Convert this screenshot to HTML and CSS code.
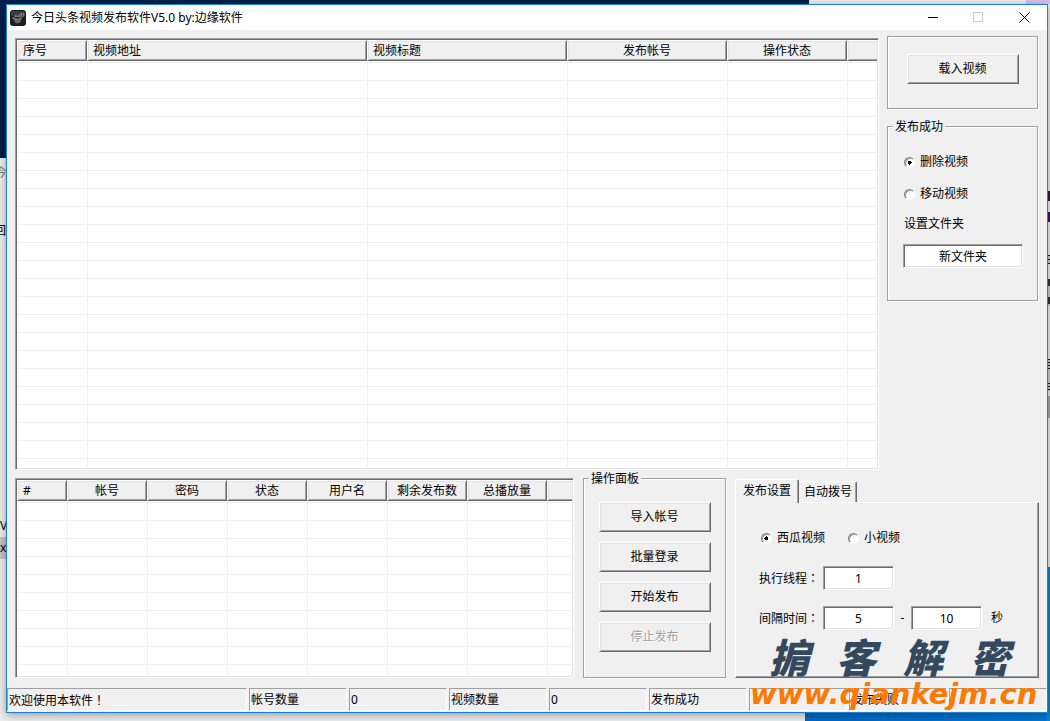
FILE: index.html
```html
<!DOCTYPE html>
<html lang="zh-CN">
<head>
<meta charset="utf-8">
<title>今日头条视频发布软件V5.0 by:边缘软件</title>
<link rel="stylesheet" href="styles.css">
</head>
<body class="desktop">
<div class="backdrop" aria-hidden="true">
  <div class="wallpaper-top"></div>
  <div class="wallpaper-taskbar"></div>
  <div class="wallpaper-right"></div>
  <div class="lilac"></div>
  <span class="peek peek-a">今</span>
  <span class="peek peek-b">回</span>
  <span class="peek peek-c">V</span>
  <span class="peek peek-d">xe</span>
  <i class="mark mark-a"></i><i class="mark mark-b"></i><i class="mark mark-c"></i><i class="mark mark-d"></i><i class="mark mark-e"></i><i class="mark mark-f"></i>
</div>
<div class="window">
  <header class="titlebar">
    <svg class="app-icon" viewBox="0 0 16 16" width="16" height="16" aria-hidden="true">
      <rect width="16" height="16" rx="3" fill="#1a1c20"/>
      <rect x="1" y="1" width="14" height="5" rx="2" fill="#3a3e44"/>
      <path d="M3.500 8.500h8c0 3.500-1.500 5-4 5s-4-1.500-4-5z" fill="#4d5457"/>
      <ellipse cx="7.500" cy="8" rx="4" ry="1.500" fill="none" stroke="#8d969b"/>
      <circle cx="12.500" cy="5" r="1.500" fill="none" stroke="#8d969b"/>
      <path d="M3.500 9L2 7.500M5 6l1.500-1M8.500 6l2.500-2.500" fill="none" stroke="#8d969b"/>
      <path d="M5 11c1.500 1 3.500 1 5 0" fill="none" stroke="#6ca02e"/>
    </svg>
    <h1 class="title">今日头条视频发布软件V5.0 by:边缘软件</h1>
    <div class="controls">
      <button class="control" type="button" aria-label="最小化"><svg width="11" height="11" viewBox="0 0 11 11"><path d="M1 5.500h10" stroke="#000"/></svg></button>
      <button class="control" type="button" aria-label="最大化" disabled><svg width="11" height="11" viewBox="0 0 11 11"><rect x=".5" y=".5" width="9" height="9" fill="none" stroke="#ccc"/></svg></button>
      <button class="control" type="button" aria-label="关闭"><svg width="11" height="11" viewBox="0 0 11 11"><path d="M.5 .5l10 10M10.500 .5l-10 10" stroke="#000"/></svg></button>
    </div>
  </header>
  <main class="client">
    <div class="upper">
      <div class="list">
        <table class="grid">
          <colgroup><col class="w70"><col class="w280"><col class="w200"><col class="w160"><col class="w120"><col></colgroup>
          <thead><tr><th class="start">序号</th><th class="start">视频地址</th><th class="start">视频标题</th><th>发布帐号</th><th>操作状态</th><th></th></tr></thead>
          <tbody><tr><td></td><td></td><td></td><td></td><td></td><td></td></tr></tbody>
        </table>
      </div>
      <aside class="side">
        <div class="group load"><button class="button" type="button">载入视频</button></div>
        <section class="group success">
          <h2 class="legend">发布成功</h2>
          <label class="choice"><input class="radio" type="radio" name="after" checked>删除视频</label>
          <label class="choice"><input class="radio" type="radio" name="after">移动视频</label>
          <label class="folder-label" for="folder">设置文件夹</label>
          <input class="field" id="folder" type="text" value="新文件夹">
        </section>
      </aside>
    </div>
    <div class="lower">
      <div class="list">
        <table class="grid">
          <colgroup><col class="w50"><col class="w80"><col class="w80"><col class="w80"><col class="w80"><col class="w80"><col class="w80"><col></colgroup>
          <thead><tr><th class="start">#</th><th>帐号</th><th>密码</th><th>状态</th><th>用户名</th><th>剩余发布数</th><th>总播放量</th><th></th></tr></thead>
          <tbody><tr><td></td><td></td><td></td><td></td><td></td><td></td><td></td><td></td></tr></tbody>
        </table>
      </div>
      <section class="group panel">
        <h2 class="legend">操作面板</h2>
        <button class="button" type="button">导入帐号</button>
        <button class="button" type="button">批量登录</button>
        <button class="button" type="button">开始发布</button>
        <button class="button" type="button" disabled>停止发布</button>
      </section>
      <section class="settings">
        <div class="tabs" role="tablist">
          <button class="tab active" type="button" role="tab" aria-selected="true">发布设置</button>
          <button class="tab" type="button" role="tab" aria-selected="false">自动拨号</button>
        </div>
        <div class="sheet" role="tabpanel">
          <div class="row kinds">
            <label class="choice"><input class="radio" type="radio" name="kind" checked>西瓜视频</label>
            <label class="choice"><input class="radio" type="radio" name="kind">小视频</label>
          </div>
          <div class="row">
            <label class="name" for="threads">执行线程<span class="mid" lang="zh-Hant">：</span></label>
            <input class="field number" id="threads" type="text" value="1">
          </div>
          <div class="row">
            <label class="name" for="from">间隔时间<span class="mid" lang="zh-Hant">：</span></label>
            <input class="field number" id="from" type="text" value="5">
            <span class="dash">-</span>
            <input class="field number" type="text" value="10" aria-label="最长间隔">
            <span class="unit">秒</span>
          </div>
        </div>
      </section>
    </div>
  </main>
  <footer class="status">
    <span class="cell wide">欢迎使用本软件<span class="mid" lang="zh-Hant">！</span></span>
    <span class="cell">帐号数量</span>
    <span class="cell">0</span>
    <span class="cell">视频数量</span>
    <span class="cell">0</span>
    <span class="cell">发布成功</span>
    <span class="cell"></span>
    <span class="cell">发布失败</span>
    <span class="cell last"></span>
  </footer>
  <div class="watermark">
    <div class="brand"><span>掮</span><span>客</span><span>解</span><span>密</span></div>
    <div class="site">www.qiankejm.cn</div>
  </div>
</div>
</body>
</html>
```
FILE: styles.css
```css
* { box-sizing: border-box; }

.desktop {
  margin: 0;
  min-height: 100vh;
  padding: 4px 2px 8px 6px;
  display: flex;
  position: relative;
  overflow: hidden;
  background: #ececec;
  color: #000;
  font: 12px/16px "Noto Sans", "Noto Sans CJK SC", sans-serif;
}

/* desktop behind the window */
.backdrop { position: absolute; inset: 0; overflow: hidden; }
.wallpaper-top { position: absolute; left: 0; top: 0; width: 809px; height: 158px; background: #00204a; }
.wallpaper-taskbar { position: absolute; left: 805px; right: 0; bottom: 0; height: 9px; background: linear-gradient(90deg, #0067c0, #0078d7); }
.wallpaper-right { position: absolute; right: 0; top: 567px; bottom: 0; width: 3px; background: #0a84c8; }
.lilac { position: absolute; right: 0; top: 0; width: 24px; height: 4px; background: #d9bfea; }
.peek { position: absolute; white-space: nowrap; }
.peek-a { left: -5px; top: 165px; color: #6d7f91; }
.peek-b { left: -6px; top: 223px; }
.peek-c { left: 0; top: 518px; }
.peek-d { left: 0; top: 537px; height: 22px; line-height: 22px; background: #c4c4c4; }
.mark { position: absolute; right: 0; width: 2px; }
.mark-a { top: 191px; height: 10px; background: #3a1140; }
.mark-b { top: 212px; height: 10px; background: #4b0a70; }
.mark-c { top: 255px; height: 9px; background: repeating-linear-gradient(#222 0 1px, #ccc 1px 4px); }
.mark-d { top: 279px; height: 27px; background: repeating-linear-gradient(#333 0 7px, #ccc 7px 18px); }
.mark-e { top: 359px; height: 32px; background: linear-gradient(transparent 11px, #ccc 11px 22px, transparent 22px), repeating-linear-gradient(#222 0 1px, #ccc 1px 3px); }
.mark-f { top: 396px; height: 22px; background: #aaa; }

.window {
  position: relative;
  flex: 1;
  min-width: 0;
  display: flex;
  flex-direction: column;
  border: 1px solid #1883d7;
  background: #f0f0f0;
  box-shadow: 0 2px 8px rgba(0, 0, 0, .35);
}

.titlebar { display: flex; align-items: center; height: 25px; padding-left: 3px; background: #fff; }
.app-icon { flex: none; margin-right: 5px; }
.title { flex: 1; margin: 0; font-size: 12px; font-weight: 400; line-height: 16px; }
.controls { display: flex; }
.control { display: grid; place-items: center; width: 46px; height: 25px; padding: 0; border: 0; background: none; }

.client { flex: 1; display: flex; flex-direction: column; gap: 8px; padding: 6px 8px 10px; }
.upper { flex: 1; display: grid; grid-template-columns: minmax(0, 1fr) 152px; gap: 8px; }
.upper .list { margin-top: 2px; }
.lower { display: grid; grid-template-columns: minmax(0, 1fr) 143px 304px; column-gap: 9px; height: 200px; }

/* sunken report list */
.list {
  display: grid;
  overflow: hidden;
  border: 1px solid;
  border-color: #a0a0a0 #fff #fff #a0a0a0;
  box-shadow: inset 1px 1px #696969, inset -1px -1px #e3e3e3;
  padding: 1px;
  background: #fff;
}
.grid { width: 100%; height: 100%; table-layout: fixed; border-collapse: separate; border-spacing: 0; }
.grid th {
  height: 21px;
  padding: 0;
  border: 1px solid;
  border-color: #fff #696969 #696969 #fff;
  box-shadow: inset 1px 1px #e3e3e3, inset -1px -1px #a0a0a0;
  background: #f0f0f0;
  font-weight: 400;
  line-height: 16px;
  text-align: center;
  white-space: nowrap;
}
.grid th.start { padding-left: 5px; text-align: left; }
.grid th:last-child { border-right: 0; box-shadow: inset 1px 1px #e3e3e3, inset 0 -1px #a0a0a0; }
.grid td { padding: 0; border-left: 1px solid #f0f0f0; background: repeating-linear-gradient(#fff 0 1px, #f0f0f0 1px 2px, #fff 2px 18px); }
.grid td:first-child { border-left: 0; }
.w50 { width: 50px; }
.w70 { width: 70px; }
.w80 { width: 80px; }
.w120 { width: 120px; }
.w160 { width: 160px; }
.w200 { width: 200px; }
.w280 { width: 280px; }

/* etched group boxes */
.group { position: relative; display: flex; flex-direction: column; border: 1px solid #a0a0a0; box-shadow: 1px 1px #fff, inset 1px 1px #fff; }
.legend { position: absolute; left: 5px; top: -8px; margin: 0; padding: 0 2px; background: #f0f0f0; font-size: 12px; font-weight: 400; line-height: 16px; }

.side { display: flex; flex-direction: column; gap: 17px; padding-right: 1px; }
.load { height: 73px; align-items: center; padding-top: 17px; }
.success { height: 175px; padding: 27px 14px 0 15px; }
.success .choice { margin-bottom: 16px; padding-left: 1px; }
.folder-label { margin-top: -2px; margin-bottom: 12px; padding-left: 1px; }
.panel { align-items: center; gap: 10px; padding-top: 23px; }

.button {
  width: 112px;
  height: 30px;
  padding: 0;
  border: 1px solid;
  border-color: #fff #696969 #696969 #fff;
  box-shadow: inset 1px 1px #e3e3e3, inset -1px -1px #a0a0a0;
  background: #f0f0f0;
  color: #000;
  font: inherit;
}
.button:disabled { color: #a0a0a0; text-shadow: 1px 1px #fff; }

.choice { display: flex; align-items: center; gap: 5px; height: 16px; }
.radio {
  appearance: none;
  flex: none;
  width: 11px;
  height: 11px;
  margin: 0;
  border: 1px solid;
  border-color: #808080 #fff #fff #808080;
  border-radius: 50%;
  background: #fff;
  box-shadow: inset 1px 1px #a0a0a0;
}
.radio:checked { background: radial-gradient(circle, #000 0 2px, #fff 2px); }

.field {
  width: 100%;
  height: 24px;
  padding: 0 2px;
  border: 1px solid;
  border-color: #a0a0a0 #fff #fff #a0a0a0;
  box-shadow: inset 1px 1px #696969, inset -1px -1px #e3e3e3;
  background: #fff;
  color: #000;
  font: inherit;
  text-align: center;
}

.settings { display: flex; flex-direction: column; padding-top: 1px; }
.tabs { display: flex; align-items: flex-end; height: 23px; }
.tab {
  width: 58px;
  height: 21px;
  padding: 0;
  border: 1px solid;
  border-color: #fff #696969 transparent transparent;
  border-bottom: 0;
  border-radius: 2px 2px 0 0;
  box-shadow: inset -1px 0 #a0a0a0;
  background: #f0f0f0;
  font: inherit;
}
.tab.active { z-index: 1; width: 64px; height: 24px; padding-bottom: 2px; margin-bottom: -1px; border-left-color: #fff; }
.sheet {
  flex: 1;
  display: flex;
  flex-direction: column;
  gap: 16px;
  padding: 23px 0 0 23px;
  border: 1px solid;
  border-color: #fff #696969 #696969 #fff;
  box-shadow: inset -1px -1px #a0a0a0;
}
.row { display: flex; align-items: center; height: 24px; }
.kinds { gap: 23px; padding-left: 2px; }
.name { width: 64px; white-space: nowrap; }
.number { width: 71px; }
.dash { width: 17px; text-align: center; }
.unit { margin-left: 9px; }
.mid { font-family: "Noto Sans CJK TC", sans-serif; }

.status { display: flex; gap: 2px; padding-bottom: 1px; }
.cell {
  flex: none;
  width: 98px;
  height: 23px;
  padding: 3px 0 0 1px;
  border: 1px solid;
  border-color: #a0a0a0 #fff #fff #a0a0a0;
  line-height: 16px;
}
.wide { width: 240px; }
.last { flex: 1; }

/* site stamp laid over the lower right corner */
.watermark { position: absolute; right: 4px; bottom: 3px; width: 293px; pointer-events: none; }
.brand {
  display: flex;
  justify-content: space-between;
  padding: 0 33px 0 19px;
  color: #34495e;
  font: italic 900 40px/46px "Noto Sans CJK SC", sans-serif;
}
.site { color: #ff7800; font: italic bold 29px/30px "DejaVu Sans", sans-serif; white-space: nowrap; }
```
